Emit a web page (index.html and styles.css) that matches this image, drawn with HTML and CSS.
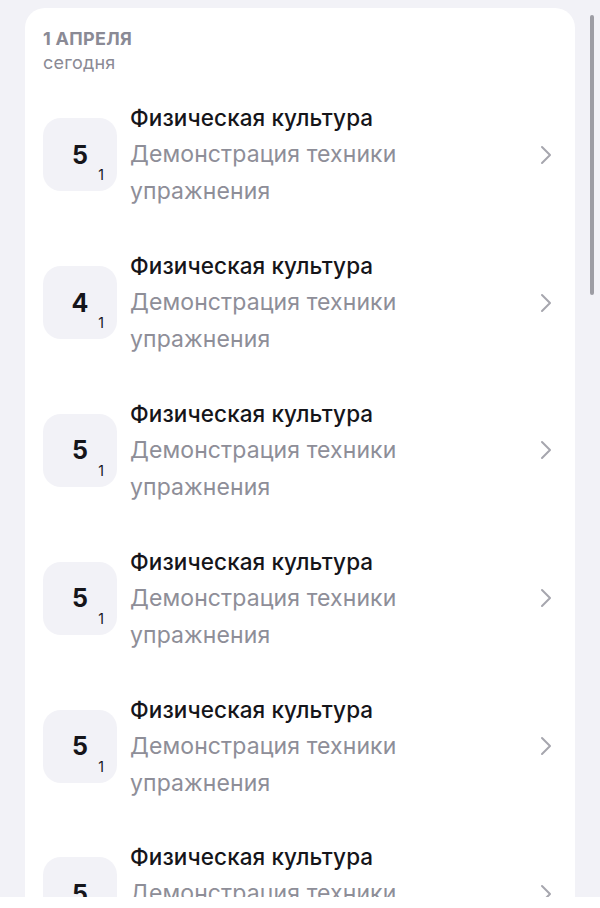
FILE: index.html
```html
<!DOCTYPE html>
<html lang="ru">
<head>
<meta charset="utf-8">
<link rel="stylesheet" href="styles.css">
</head>
<body>
<div class="page">
  <section class="card">
    <header class="day">
      <div class="day-date">1 АПРЕЛЯ</div>
      <div class="day-sub">сегодня</div>
    </header>
    <ul class="list">
      <li class="row">
        <div class="badge"><span class="mark">5</span><span class="weight">1</span></div>
        <div class="text"><div class="title">Физическая культура</div><div class="desc">Демонстрация техники упражнения</div></div>
        <svg class="chev" width="12" height="20" viewBox="0 0 12 20"><polyline points="2,2 10,10 2,18" fill="none" stroke="#a6a6ae" stroke-width="2" stroke-linecap="round" stroke-linejoin="round"/></svg>
      </li>
      <li class="row">
        <div class="badge"><span class="mark">4</span><span class="weight">1</span></div>
        <div class="text"><div class="title">Физическая культура</div><div class="desc">Демонстрация техники упражнения</div></div>
        <svg class="chev" width="12" height="20" viewBox="0 0 12 20"><polyline points="2,2 10,10 2,18" fill="none" stroke="#a6a6ae" stroke-width="2" stroke-linecap="round" stroke-linejoin="round"/></svg>
      </li>
      <li class="row">
        <div class="badge"><span class="mark">5</span><span class="weight">1</span></div>
        <div class="text"><div class="title">Физическая культура</div><div class="desc">Демонстрация техники упражнения</div></div>
        <svg class="chev" width="12" height="20" viewBox="0 0 12 20"><polyline points="2,2 10,10 2,18" fill="none" stroke="#a6a6ae" stroke-width="2" stroke-linecap="round" stroke-linejoin="round"/></svg>
      </li>
      <li class="row">
        <div class="badge"><span class="mark">5</span><span class="weight">1</span></div>
        <div class="text"><div class="title">Физическая культура</div><div class="desc">Демонстрация техники упражнения</div></div>
        <svg class="chev" width="12" height="20" viewBox="0 0 12 20"><polyline points="2,2 10,10 2,18" fill="none" stroke="#a6a6ae" stroke-width="2" stroke-linecap="round" stroke-linejoin="round"/></svg>
      </li>
      <li class="row">
        <div class="badge"><span class="mark">5</span><span class="weight">1</span></div>
        <div class="text"><div class="title">Физическая культура</div><div class="desc">Демонстрация техники упражнения</div></div>
        <svg class="chev" width="12" height="20" viewBox="0 0 12 20"><polyline points="2,2 10,10 2,18" fill="none" stroke="#a6a6ae" stroke-width="2" stroke-linecap="round" stroke-linejoin="round"/></svg>
      </li>
      <li class="row">
        <div class="badge"><span class="mark">5</span><span class="weight">1</span></div>
        <div class="text"><div class="title">Физическая культура</div><div class="desc">Демонстрация техники упражнения</div></div>
        <svg class="chev" width="12" height="20" viewBox="0 0 12 20"><polyline points="2,2 10,10 2,18" fill="none" stroke="#a6a6ae" stroke-width="2" stroke-linecap="round" stroke-linejoin="round"/></svg>
      </li>
    </ul>
  </section>
</div>
<div class="scroll-thumb"></div>
<div class="bottom-strip"></div>
</body>
</html>
```
FILE: styles.css
```css
html, body {
  margin: 0;
  padding: 0;
  height: 100%;
  overflow: hidden;
}
body {
  background: #f2f2f7;
  font-family: Inter, "Noto Sans", sans-serif;
  -webkit-font-smoothing: antialiased;
}
.page {
  padding: 8px 25px 0;
}
.card {
  background: #ffffff;
  border-radius: 20px;
  padding: 20px 23px 0 18px;
}
.day-date {
  font-size: 18px;
  font-weight: 700;
  line-height: 22px;
  color: #8a8a95;
  letter-spacing: 0.3px;
}
.day-sub {
  margin-top: 2px;
  font-size: 18px;
  line-height: 22px;
  color: #8a8a95;
  letter-spacing: 0.2px;
}
.list {
  list-style: none;
  margin: 7px 0 0;
  padding: 0;
}
.row {
  display: flex;
  align-items: center;
  padding: 18.4px 0;
}
.badge {
  position: relative;
  width: 74px;
  height: 73px;
  border-radius: 18px;
  background: #f2f2f7;
  flex: none;
  display: flex;
  align-items: center;
  justify-content: center;
}
.mark {
  font-size: 25px;
  font-weight: 700;
  color: #15151a;
}
.weight {
  position: absolute;
  right: 13px;
  bottom: 8px;
  font-size: 14px;
  color: #15151a;
}
.text {
  flex: 1;
  margin-left: 13px;
  line-height: 37px;
}
.title {
  font-size: 22.5px;
  font-weight: 500;
  color: #15151a;
  letter-spacing: 0.1px;
}
.desc {
  font-size: 23px;
  color: #8e8e98;
  max-width: 300px;
  letter-spacing: 0.1px;
}
.chev {
  flex: none;
}
.scroll-thumb {
  position: fixed;
  top: 15px;
  right: 6px;
  width: 4px;
  height: 280px;
  border-radius: 2px;
  background: #9d9da4;
}
.bottom-strip {
  position: fixed;
  left: 0;
  right: 0;
  bottom: 0;
  height: 11px;
  background: #ffffff;
}
```
